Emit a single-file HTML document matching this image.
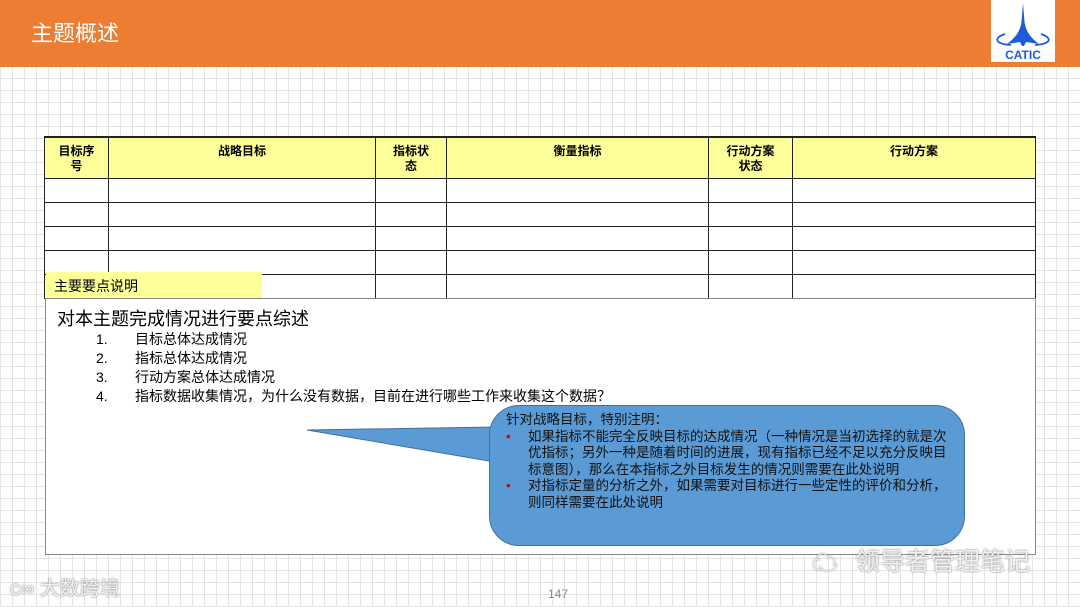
<!DOCTYPE html>
<html><head><meta charset="utf-8"><style>
*{margin:0;padding:0;box-sizing:border-box}
body{width:1080px;height:607px;overflow:hidden;position:relative;font-family:"Liberation Sans","Noto Sans CJK SC",sans-serif;
background-color:#fff;
background-image:repeating-linear-gradient(90deg,#e4e4e4 0 1px,transparent 1px 12px),repeating-linear-gradient(0deg,#e4e4e4 0 1px,transparent 1px 12px);}
.hdr{position:absolute;left:0;top:0;width:1080px;height:67px;background:#ec7d33}
.hdr h1{position:absolute;left:31px;top:16px;color:#fff;font-size:22px;font-weight:normal}
.logo{position:absolute;left:991px;top:0;width:64px;height:62px;background:#fff}
table{position:absolute;left:44px;top:136px;border-collapse:collapse;background:#fff}
td{border:1px solid #222;height:24px;font-size:12px;font-weight:bold;text-align:center;vertical-align:top;line-height:15px}
tr.h td{background:#ffff99;height:41px;padding-top:6px;border-top:2px solid #222}
.lbl{position:absolute;left:46px;top:272px;width:216px;height:26px;background:#ffff99;font-size:14px;padding:4px 8px}
.box{position:absolute;left:45px;top:298px;width:991px;height:257px;background:#fff;border:1px solid #888}
.box h2{position:absolute;left:11px;top:6px;font-size:18px;font-weight:normal}
.box ol{position:absolute;left:50px;top:31px;list-style:none;font-size:14px;line-height:19px}
.box ol span{display:inline-block;width:39px}
.bub{position:absolute;left:489px;top:405px;width:476px;height:141px;background:#5b9bd5;border:1px solid #41719c;border-radius:30px;font-size:13.5px;line-height:16.5px;padding:6px 8px 0 16px;color:#111}
.bub p.b{padding-left:22px;position:relative}
.bub p.b:before{content:"•";color:#d00;position:absolute;left:0}
.wm{position:absolute;color:rgba(255,255,255,.85);text-shadow:0 0 2px #888,0 0 1px #aaa}
</style></head><body>
<div class="hdr"><h1>主题概述</h1>
<div class="logo"><svg width="64" height="62" viewBox="0 0 64 62">
<path d="M32 3 L33.5 22 C35 32 40 38 48 44 L35 42 L33 46 L31 46 L29 42 L16 44 C24 38 29 32 30.5 22 Z" fill="#1f5ad8"/>
<path d="M14 34 C2 38 4 44 20 45 M50 34 C62 38 60 44 44 45" fill="none" stroke="#1f5ad8" stroke-width="1.8"/>
<text x="32" y="59" text-anchor="middle" font-family="Liberation Sans" font-weight="bold" font-size="12" fill="#1f5ad8">CATIC</text>
</svg></div></div>
<table>
<tr class="h"><td style="width:64px">目标序<br>号</td><td style="width:267px">战略目标</td><td style="width:71px">指标状<br>态</td><td style="width:262px">衡量指标</td><td style="width:84px">行动方案<br>状态</td><td style="width:243px">行动方案</td></tr>
<tr><td></td><td></td><td></td><td></td><td></td><td></td></tr>
<tr><td></td><td></td><td></td><td></td><td></td><td></td></tr>
<tr><td></td><td></td><td></td><td></td><td></td><td></td></tr>
<tr><td></td><td></td><td></td><td></td><td></td><td></td></tr>
<tr><td></td><td></td><td></td><td></td><td></td><td></td></tr>
</table>
<div class="lbl">主要要点说明</div>
<div class="box"><h2>对本主题完成情况进行要点综述</h2>
<ol><li><span>1.</span>目标总体达成情况</li><li><span>2.</span>指标总体达成情况</li><li><span>3.</span>行动方案总体达成情况</li><li><span>4.</span>指标数据收集情况，为什么没有数据，目前在进行哪些工作来收集这个数据？</li></ol></div>
<svg style="position:absolute;left:300px;top:420px" width="200" height="50"><path d="M7 10 L195 7 L195 42 Z" fill="#5b9bd5" stroke="#41719c" stroke-width="1"/></svg>
<div class="bub"><p>针对战略目标，特别注明：</p>
<p class="b">如果指标不能完全反映目标的达成情况（一种情况是当初选择的就是次优指标；另外一种是随着时间的进展，现有指标已经不足以充分反映目标意图），那么在本指标之外目标发生的情况则需要在此处说明</p>
<p class="b">对指标定量的分析之外，如果需要对目标进行一些定性的评价和分析，则同样需要在此处说明</p></div>
<div class="wm" style="left:855px;top:542px;font-size:25px">领导者管理笔记</div>
<div class="wm" style="left:812px;top:543px;font-size:26px">☁</div>
<div class="wm" style="left:10px;top:572px;font-size:20px">ᴄ∞ 大数跨境</div>
<div style="position:absolute;left:548px;top:587px;font-size:12px;color:#888">147</div>
</body></html>
